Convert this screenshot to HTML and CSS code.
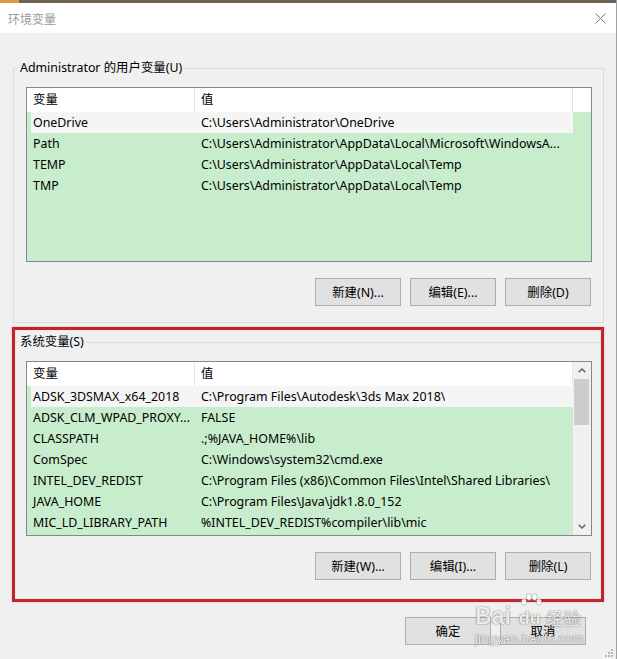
FILE: index.html
```html
<!DOCTYPE html>
<html lang="zh-CN">
<head>
<meta charset="utf-8">
<title>环境变量</title>
<link rel="stylesheet" href="styles.css">
</head>
<body>
<div class="dialog">
  <div class="topstrip"><span class="topstrip-accent"></span></div>
  <div class="titlebar">
    <span class="title">环境变量</span>
    <svg class="close" width="11" height="11" viewBox="0 0 11 11"><path d="M0.5 0.5L10.5 10.5M10.5 0.5L0.5 10.5" stroke="#7a7a7a" stroke-width="1" fill="none"/></svg>
  </div>
  <div class="content">
    <fieldset class="group">
      <legend>Administrator 的用户变量(U)</legend>
      <div class="list">
        <div class="list-main">
          <div class="list-head"><div class="hcell c1">变量</div><div class="hcell c2">值</div></div>
          <div class="row hot"><span class="c1">OneDrive</span><span class="c2">C:\Users\Administrator\OneDrive</span></div>
          <div class="row"><span class="c1">Path</span><span class="c2">C:\Users\Administrator\AppData\Local\Microsoft\WindowsA...</span></div>
          <div class="row"><span class="c1">TEMP</span><span class="c2">C:\Users\Administrator\AppData\Local\Temp</span></div>
          <div class="row"><span class="c1">TMP</span><span class="c2">C:\Users\Administrator\AppData\Local\Temp</span></div>
        </div>
        <div class="list-side"><div class="side-head"></div></div>
      </div>
      <div class="buttons">
        <button class="btn">新建(N)...</button>
        <button class="btn">编辑(E)...</button>
        <button class="btn">删除(D)</button>
      </div>
    </fieldset>
    <fieldset class="group group-system">
      <legend>系统变量(S)</legend>
      <div class="list">
        <div class="list-main">
          <div class="list-head"><div class="hcell c1">变量</div><div class="hcell c2">值</div></div>
          <div class="row hot"><span class="c1">ADSK_3DSMAX_x64_2018</span><span class="c2">C:\Program Files\Autodesk\3ds Max 2018\</span></div>
          <div class="row"><span class="c1">ADSK_CLM_WPAD_PROXY...</span><span class="c2">FALSE</span></div>
          <div class="row"><span class="c1">CLASSPATH</span><span class="c2">.;%JAVA_HOME%\lib</span></div>
          <div class="row"><span class="c1">ComSpec</span><span class="c2">C:\Windows\system32\cmd.exe</span></div>
          <div class="row"><span class="c1">INTEL_DEV_REDIST</span><span class="c2">C:\Program Files (x86)\Common Files\Intel\Shared Libraries\</span></div>
          <div class="row"><span class="c1">JAVA_HOME</span><span class="c2">C:\Program Files\Java\jdk1.8.0_152</span></div>
          <div class="row"><span class="c1">MIC_LD_LIBRARY_PATH</span><span class="c2">%INTEL_DEV_REDIST%compiler\lib\mic</span></div>
        </div>
        <div class="scrollbar">
          <div class="sb-arrow"><svg width="8" height="5" viewBox="0 0 8 5"><polyline points="0.7,4.3 4,1 7.3,4.3" fill="none" stroke="#606060" stroke-width="1.4"/></svg></div>
          <div class="sb-thumb"></div>
          <div class="sb-track"></div>
          <div class="sb-arrow"><svg width="8" height="5" viewBox="0 0 8 5"><polyline points="0.7,0.7 4,4 7.3,0.7" fill="none" stroke="#606060" stroke-width="1.4"/></svg></div>
        </div>
      </div>
      <div class="buttons">
        <button class="btn">新建(W)...</button>
        <button class="btn">编辑(I)...</button>
        <button class="btn">删除(L)</button>
      </div>
    </fieldset>
    <div class="footer">
      <button class="btn">确定</button>
      <button class="btn">取消</button>
    </div>
  </div>
  <div class="annotation"></div>
  <div class="watermark">
    <div class="wm-line1"><span class="wm-bai">Bai</span><span class="wm-du"><svg class="wm-paw" width="22" height="14" viewBox="0 0 22 14"><ellipse cx="4" cy="9" rx="2.6" ry="3.2"/><ellipse cx="9" cy="4" rx="2.6" ry="3.4"/><ellipse cx="14.5" cy="4" rx="2.6" ry="3.4"/><ellipse cx="19" cy="9" rx="2.6" ry="3.2"/></svg>du</span><span class="wm-jy">经验</span></div>
    <div class="wm-url">jingyan.baidu.com</div>
  </div>
  <svg class="grip" width="10" height="10" viewBox="0 0 10 10"><rect x="8" y="2" width="2" height="2"/><rect x="5" y="5" width="2" height="2"/><rect x="8" y="5" width="2" height="2"/><rect x="2" y="8" width="2" height="2"/><rect x="5" y="8" width="2" height="2"/><rect x="8" y="8" width="2" height="2"/></svg>
</div>
</body>
</html>
```
FILE: styles.css
```css
html, body {
  margin: 0;
  padding: 0;
}
body {
  background: #f0f0f0;
  font-family: "Noto Sans", "Noto Sans CJK SC", sans-serif;
  font-size: 12.4px;
  color: #000;
}
.dialog {
  position: relative;
  width: 616px;
  height: 659px;
  border-right: 1px solid #a0a0a0;
  background: #f0f0f0;
  overflow: hidden;
}
.topstrip {
  height: 3px;
  background: #6e6253;
  display: flex;
}
.topstrip-accent {
  width: 19px;
  background: #e29a3e;
}
.titlebar {
  height: 30px;
  background: #fff;
  display: flex;
  align-items: center;
  justify-content: space-between;
  padding: 0 10px 0 8px;
}
.title {
  color: #9a9a9a;
  font-family: "Noto Sans CJK SC", sans-serif;
  font-size: 12px;
}
.close {
  display: block;
}
.content {
  padding: 27px 12px 0 13px;
}
.group {
  margin: 0;
  border: 1px solid #dcdcdc;
  padding: 11px 11px 16px 12px;
  min-width: 0;
}
.group-system {
  margin-top: 11px;
  padding-bottom: 19px;
}
.group legend {
  padding: 0 2px;
  margin-left: -8px;
  line-height: 16px;
  font-size: 12.4px;
}
.list {
  box-sizing: border-box;
  height: 175px;
  border: 1px solid #828790;
  background: #c7edcc;
  display: flex;
  overflow: hidden;
}
.list-main {
  width: 546px;
  display: flex;
  flex-direction: column;
}
.list-head {
  height: 24px;
  flex: none;
  background: #fff;
  display: flex;
}
.hcell {
  box-sizing: border-box;
  border-right: 1px solid #e5e5e5;
  padding-left: 6px;
  line-height: 24px;
}
.hcell.c1 {
  width: 168px;
}
.hcell.c2 {
  flex: 1;
}
.row {
  flex: none;
  display: flex;
  height: 21px;
  line-height: 21px;
  margin-left: 4px;
  white-space: nowrap;
}
.row.hot {
  background: #f5f5f5;
}
.row .c1 {
  box-sizing: border-box;
  width: 164px;
  padding-left: 2px;
  overflow: hidden;
}
.row .c2 {
  padding-left: 6px;
  overflow: hidden;
}
.list-side {
  flex: 1;
}
.side-head {
  height: 24px;
  background: #fff;
}
.scrollbar {
  flex: 1;
  background: #f0f0f0;
  display: flex;
  flex-direction: column;
}
.sb-arrow {
  height: 17px;
  flex: none;
  display: flex;
  align-items: center;
  justify-content: center;
}
.sb-arrow svg {
  display: block;
}
.sb-thumb {
  height: 46px;
  flex: none;
  margin: 0 2px 0 1px;
  background: #cdcdcd;
}
.sb-track {
  flex: 1;
}
.buttons {
  display: flex;
  justify-content: flex-end;
  gap: 9px;
  margin-top: 16px;
  padding-right: 1px;
}
.btn {
  box-sizing: border-box;
  width: 86px;
  height: 28px;
  margin: 0;
  padding: 0;
  background: #e1e1e1;
  border: 1px solid #adadad;
  border-radius: 0;
  font-family: "Noto Sans", "Noto Sans CJK SC", sans-serif;
  font-size: 12.4px;
  color: #000;
}
.footer {
  display: flex;
  justify-content: flex-end;
  gap: 9px;
  padding: 17px 18px 0 0;
}
.annotation {
  position: absolute;
  left: 12px;
  top: 327px;
  width: 592px;
  height: 275px;
  box-sizing: border-box;
  border: 3px solid #c2252b;
  box-shadow: 0 0 1px rgba(194, 37, 43, 0.6), inset 0 0 1px rgba(194, 37, 43, 0.6);
  pointer-events: none;
}
.watermark {
  position: absolute;
  left: 475px;
  top: 602px;
  color: rgba(255, 255, 255, 0.9);
  text-shadow: 0 0 1px rgba(0, 0, 0, 0.55), 0 0 2px rgba(0, 0, 0, 0.25);
  font-family: "Liberation Sans", "Noto Sans CJK SC", sans-serif;
  pointer-events: none;
}
.wm-line1 {
  display: flex;
  align-items: flex-end;
  height: 28px;
}
.wm-bai {
  font-size: 23px;
  line-height: 28px;
  font-weight: bold;
}
.wm-du {
  position: relative;
  font-size: 18px;
  line-height: 24px;
  font-weight: bold;
  margin-left: 8px;
}
.wm-paw {
  position: absolute;
  left: 1px;
  top: -13px;
  fill: rgba(255, 255, 255, 0.9);
  stroke: rgba(60, 60, 60, 0.45);
  stroke-width: 0.6;
}
.wm-jy {
  font-family: "Noto Sans CJK SC", sans-serif;
  font-size: 17.5px;
  line-height: 24px;
  margin-left: 5px;
}
.wm-url {
  font-size: 13.5px;
  line-height: 16px;
  margin-top: 1px;
}
.grip {
  position: absolute;
  right: 3px;
  bottom: 2px;
  fill: #b8b8b8;
}
```
